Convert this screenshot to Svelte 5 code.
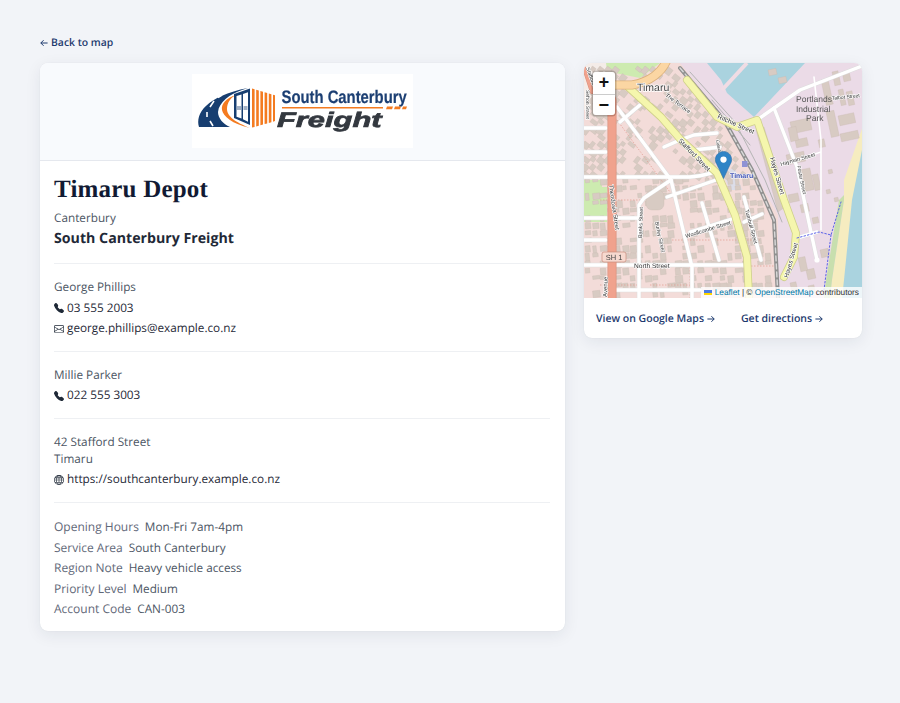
<script lang="ts">
	const contacts = [
		{ name: 'George Phillips', phone: '03 555 2003', email: 'george.phillips@example.co.nz' },
		{ name: 'Millie Parker', phone: '022 555 3003', email: '' }
	];

	const meta = [
		['Opening Hours', 'Mon-Fri 7am-4pm'],
		['Service Area', 'South Canterbury'],
		['Region Note', 'Heavy vehicle access'],
		['Priority Level', 'Medium'],
		['Account Code', 'CAN-003']
	];

	const phonePath =
		'M1.885.511a1.745 1.745 0 0 1 2.61.163L6.29 2.98c.329.423.445.974.315 1.494l-.547 2.19a.678.678 0 0 0 .178.643l2.457 2.457a.678.678 0 0 0 .644.178l2.189-.547a1.745 1.745 0 0 1 1.494.315l2.306 1.794c.829.645.905 1.87.163 2.611l-1.034 1.034c-.74.74-1.846 1.065-2.877.702a18.634 18.634 0 0 1-7.01-4.42 18.634 18.634 0 0 1-4.42-7.009c-.362-1.03-.037-2.137.703-2.877L1.885.511z';
	const mailPath =
		'M0 4a2 2 0 0 1 2-2h12a2 2 0 0 1 2 2v8a2 2 0 0 1-2 2H2a2 2 0 0 1-2-2V4Zm2-1a1 1 0 0 0-1 1v.217l7 4.2 7-4.2V4a1 1 0 0 0-1-1H2Zm13 2.383-4.708 2.825L15 11.105V5.383Zm-.034 6.876-5.64-3.471L8 9.583l-1.326-.795-5.64 3.47A1 1 0 0 0 2 13h12a1 1 0 0 0 .966-.741ZM1 11.105l4.708-2.897L1 5.383v5.722Z';
	const globePath =
		'M0 8a8 8 0 1 1 16 0A8 8 0 0 1 0 8zm7.5-6.923c-.67.204-1.335.82-1.887 1.855A7.97 7.97 0 0 0 5.145 4H7.5V1.077zM4.09 4a9.267 9.267 0 0 1 .64-1.539 6.7 6.7 0 0 1 .597-.933A7.025 7.025 0 0 0 2.255 4H4.09zm-.582 3.5c.03-.877.138-1.718.312-2.5H1.674a6.958 6.958 0 0 0-.656 2.5h2.49zM4.847 5a12.5 12.5 0 0 0-.338 2.5H7.5V5H4.847zM8.5 5v2.5h2.99a12.495 12.495 0 0 0-.337-2.5H8.5zM4.51 8.5a12.5 12.5 0 0 0 .337 2.5H7.5V8.5H4.51zm3.99 0V11h2.653c.187-.765.306-1.608.338-2.5H8.5zM5.145 12c.138.386.295.744.468 1.068.552 1.035 1.218 1.65 1.887 1.855V12H5.145zm.182 2.472a6.696 6.696 0 0 1-.597-.933A9.268 9.268 0 0 1 4.09 12H2.255a7.024 7.024 0 0 0 3.072 2.472zM3.82 11a13.652 13.652 0 0 1-.312-2.5h-2.49c.062.89.291 1.733.656 2.5H3.82zm6.853 3.472A7.024 7.024 0 0 0 13.745 12H11.91a9.27 9.27 0 0 1-.64 1.539 6.688 6.688 0 0 1-.597.933zM8.5 12v2.923c.67-.204 1.335-.82 1.887-1.855.173-.324.33-.682.468-1.068H8.5zm3.68-1h2.146c.365-.767.594-1.61.656-2.5h-2.49a13.65 13.65 0 0 1-.312 2.5zm2.802-3.5a6.959 6.959 0 0 0-.656-2.5H12.18c.174.782.282 1.623.312 2.5h2.49zM11.27 2.461c.247.464.462.98.64 1.539h1.835a7.024 7.024 0 0 0-3.072-2.472c.218.284.418.598.597.933zM10.855 4a7.966 7.966 0 0 0-.468-1.068C9.835 1.897 9.17 1.282 8.5 1.077V4h2.355z';

	// the map is a hand-traced sketch, coordinates are page pixels (see viewBox)
	let seed = 7;
	function rnd() {
		seed = (seed * 16807) % 2147483647;
		return seed / 2147483647;
	}

	function westSide(x: number, y: number) {
		const rail = y < 120 ? 680 + (y - 70) * 0.9 : 725 + (y - 120) * 0.48;
		return x < rail - 4;
	}

	const houses: { x: number; y: number; w: number; h: number; a: number }[] = [];
	for (let y = 66; y < 298; y += 7.5) {
		for (let x = 585; x < 770; x += 7.5) {
			if (!westSide(x, y) || rnd() < 0.4) continue;
			houses.push({
				x,
				y,
				w: 3.5 + rnd() * 4,
				h: 3.5 + rnd() * 4,
				a: y < 175 ? 38 : -6
			});
		}
	}

	const sheds = [
		[821, 80, 7, 26], [832, 72, 6, 14], [842, 72, 7, 10], [838, 90, 5, 16], [846, 92, 6, 14],
		[826, 112, 8, 26], [838, 116, 16, 10], [840, 134, 18, 8], [790, 122, 20, 12], [795, 140, 12, 8],
		[788, 128, 8, 14], [786, 155, 18, 10], [800, 170, 10, 22], [812, 175, 6, 16], [788, 195, 10, 8],
		[800, 205, 8, 8], [812, 218, 6, 6], [806, 270, 8, 10], [820, 250, 8, 8], [798, 258, 7, 14],
		[790, 283, 6, 10], [808, 286, 6, 8], [826, 190, 4, 4], [834, 198, 4, 4], [828, 170, 4, 4],
		[818, 140, 6, 8], [768, 70, 8, 6], [778, 78, 8, 6]
	];

	const whiteRoads = [
		'M584 177H690Q712 175 722 168',
		'M584 265H749',
		'M584 128H606',
		'M584 152H606',
		'M584 240H606',
		'M617 107L671 180L692 267V298',
		'M671 180L644 198L639 205V298',
		'M639 218H584',
		'M620 122L640 105',
		'M664 147L680 140L694 135L717 133',
		'M694 150L720 147',
		'M702 203L719 260',
		'M744 197L761 260',
		'M667 197L716 180',
		'M690 232L735 218',
		'M744 222L762 214',
		'M606 290H700',
		'M757 120L800 90L862 66',
		'M774 108L797 167L817 260',
		'M797 238L817 232'
	];

	const streetLabels = [
		{ t: 'Stafford Street', x: 678, y: 141, a: 46, s: 6.6 },
		{ t: 'Ritchie Street', x: 717, y: 118, a: 24, s: 6.6 },
		{ t: 'Hayes Street', x: 770, y: 158, a: 74, s: 6.6 },
		{ t: 'Hayes Street', x: 788, y: 278, a: -74, s: 6.2 },
		{ t: 'The Terrace', x: 665, y: 96, a: 36, s: 5.6 },
		{ t: 'Woollcombe Street', x: 686, y: 238, a: -17, s: 5.6 },
		{ t: 'Theodosia Street', x: 609, y: 185, a: 82, s: 6 },
		{ t: 'Avenue', x: 607, y: 297, a: -88, s: 6 },
		{ t: 'Banks Street', x: 642, y: 238, a: -88, s: 5.4 },
		{ t: 'Burley Street', x: 655, y: 222, a: 78, s: 5.4 },
		{ t: 'Turnbull Street', x: 745, y: 210, a: 75, s: 5.4 },
		{ t: 'Caledonian', x: 716, y: 140, a: 80, s: 4.6 },
		{ t: 'Hayman Street', x: 781, y: 166, a: -16, s: 5.4 },
		{ t: 'Foster Street', x: 797, y: 166, a: 78, s: 5 },
		{ t: 'Talbot Street', x: 832, y: 100, a: -6, s: 5 },
		{ t: 'Sefton Street', x: 586, y: 90, a: 90, s: 5 },
		{ t: 'Stafford', x: 586, y: 68, a: 70, s: 5.4 },
		{ t: 'North Street', x: 634, y: 268, a: 0, s: 6.6 }
	];
</script>

<main class="page">
	<a class="back" href="#map">
		<svg viewBox="0 0 8 8"><path d="M7.6 4H.8M3.6 1.2L.8 4l2.8 2.8" /></svg>Back to map
	</a>

	<div class="layout">
		<article class="card depot">
			<div class="logo-band">
				<svg class="logo" viewBox="0 0 221 74" role="img" aria-label="South Canterbury Freight">
					<rect width="221" height="74" fill="#fff" />
					<path d="M7 53C3 40 14 22 56 14L50 16C38 20 27 28 26 38C26 44 31 50 38 53Z" fill="#173e70" />
					<path d="M30 21L26 23.5M22 27L18 33M15 38L15 43M18 47L21 52" stroke="#fff" stroke-width="1.6" fill="none" />
					<path d="M44 21C34 24 29 30 30 36C31 42 40 50 58 54C48 50 35 44 35 35C35 29 38 24 44 21Z" fill="#f47b20" />
					<path d="M42 20L58 14.5V51L42 44Z" fill="#173e70" />
					<path d="M44.5 22L49.5 20.4V44.6L44.5 42.8ZM51 20L56 18.2V47.8L51 45.2Z" fill="#fff" />
					<path d="M45 33H49M45 35H49M51.5 33H55.5M51.5 35H55.5" stroke="#173e70" stroke-width=".8" />
					<g fill="#f47b20">
						<path d="M60 14.5L62.6 15.3V53L60 53.6Z" />
						<path d="M64.2 15.8L66.8 16.6V51.8L64.2 52.5Z" />
						<path d="M68.4 17L71 17.8V50.6L68.4 51.3Z" />
						<path d="M72.6 18.3L75.2 19V49.4L72.6 50.1Z" />
						<path d="M76.8 19.5L79.4 20.2V48.2L76.8 48.9Z" />
						<path d="M81 20.7L83 21.3V47L81 47.7Z" />
					</g>
					<text class="logo-top" transform="translate(89.5 29.4) scale(.824 1)">South Canterbury</text>
					<path d="M90 33H191V34.6H90Z" fill="#f47b20" />
					<path d="M195 32.6H201L200 35.2H194ZM203 32.6H209L208 35.2H202ZM211 32.6H215L214 35.2H210Z" fill="#f47b20" />
					<text class="logo-bottom" transform="translate(85 52.7) scale(1.47 1)">Freight</text>
				</svg>
			</div>

			<section class="section head">
				<h1>Timaru Depot</h1>
				<p class="muted">Canterbury</p>
				<p class="company">South Canterbury Freight</p>
			</section>

			{#each contacts as c}
				<section class="section rows">
					<p class="muted">{c.name}</p>
					<p class="icon-row">
						<svg viewBox="0 0 16 16"><path d={phonePath} /></svg>{c.phone}
					</p>
					{#if c.email}
						<p class="icon-row">
							<svg viewBox="0 0 16 16"><path d={mailPath} /></svg>{c.email}
						</p>
					{/if}
				</section>
			{/each}

			<section class="section rows">
				<p class="muted address">42 Stafford Street<br />Timaru</p>
				<p class="icon-row">
					<svg viewBox="0 0 16 16"><path d={globePath} /></svg>https://southcanterbury.example.co.nz
				</p>
			</section>

			<section class="section rows last">
				{#each meta as [label, value]}
					<p class="meta"><span>{label}</span>{value}</p>
				{/each}
			</section>
		</article>

		<aside class="card map-card">
			<div class="map">
				<svg class="tiles" viewBox="584 63 278 235" aria-hidden="true">
					<rect x="584" y="63" width="278" height="235" fill="#f3dcd9" />
					<path d="M680 63L725 120L778 215V298H862V63Z" fill="#ebdbe7" />
					<path d="M707 63L721 80L727 93L754 117L805 63Z" fill="#aad3df" />
					<path d="M747 63L722 90" stroke="#f0dce4" stroke-width="4" fill="none" />
					<path d="M864 123L851 160L844 180V200L832 280L830 298H862V123Z" fill="#f6ecc0" />
					<path d="M862 150L856 180L852 200L844 280L842 298H862Z" fill="#aad3df" />
					<path d="M844 195L839 200L826 280L824 298H830L832 280L844 200Z" fill="#c8dfae" />
					<path d="M584 187H607V222H584Z" fill="#cdebb0" />
					<path d="M584 180H602V190H584ZM600 63H660L640 78L610 72Z" fill="#cdebb0" />
					<path d="M584 63H606L612 110H584Z" fill="#f4ece8" />
					<path d="M722 172L735 168L742 190H730Z" fill="#dcdde8" />

					<g fill="#d8cbc3" stroke="#c6b8ae" stroke-width=".3">
						{#each houses as h}
							<rect x={h.x} y={h.y} width={h.w} height={h.h} transform="rotate({h.a} {h.x} {h.y})" />
						{/each}
						{#each sheds as s}
							<rect x={s[0]} y={s[1]} width={s[2]} height={s[3]} transform="rotate(-12 {s[0]} {s[1]})" />
						{/each}
						<path d="M756 130L764 127L788 205L778 212Z" />
						<rect x="646" y="190" width="18" height="20" rx="6" />
					</g>

					<g fill="none" stroke="#e39b90" stroke-width=".7" stroke-dasharray="1.5 1.5">
						<path d="M617 120L670 192M600 200H640M672 240H760M690 255V298M600 285H640M650 285H690M748 266H775" />
					</g>

					<g fill="none" stroke-linecap="round" stroke-linejoin="round">
						<g stroke="#ddd" stroke-width="4.4">
							{#each whiteRoads as d}<path {d} />{/each}
						</g>
						<g stroke="#fff" stroke-width="3.4">
							{#each whiteRoads as d}<path {d} />{/each}
						</g>
						<path d="M814 77L821 140V230M781 165L821 152" stroke="#fff" stroke-width="1.6" />
						<circle cx="817" cy="260" r="2.6" fill="#fff" stroke="none" />

						<path d="M680 68L724 120L752 170L774 220L778 298" stroke="#8f8f8f" stroke-width="4" />
						<path d="M680 68L724 120L752 170L774 220L778 298" stroke="#d9d9d9" stroke-width="1.4" stroke-dasharray="5 3" />
						<path d="M690 72L735 122L765 180L782 222M712 100L750 145" stroke="#b5b5b5" stroke-width="1" />

						<path d="M584 68L592 92" stroke="#d98f7c" stroke-width="4" />
						<path d="M612 100V298" stroke="#d98f7c" stroke-width="9" />
						<path d="M584 68L592 92" stroke="#f0a28d" stroke-width="3" />
						<path d="M612 100V298" stroke="#f0a28d" stroke-width="7.6" />

						<path d="M627 86L661 117L681 140L717 173L735 215L747 257L749 298" stroke="#cfd08a" stroke-width="8" />
						<path d="M627 86L661 117L681 140L717 173L735 215L747 257L749 298" stroke="#f5f6ad" stroke-width="6.4" />
						<path d="M687 80L717 117L737 127L757 120L784 200L796 233L794 257L784 277" stroke="#cfd08a" stroke-width="8" />
						<path d="M687 80L717 117L737 127L757 120L784 200L796 233L794 257L784 277" stroke="#f5f6ad" stroke-width="6.4" />

						<path d="M667 60C662 72 650 82 632 85H600" stroke="#dcb27d" stroke-width="9" />
						<path d="M667 60C662 72 650 82 632 85H600" stroke="#fbd6a3" stroke-width="7.4" />

						<path d="M797 238L819 232L831 235L841 202M831 235L824 290" stroke="#5a62e8" stroke-width="1" stroke-dasharray="1.6 2" />
					</g>

					<g class="street">
						{#each streetLabels as l}
							<text x={l.x} y={l.y} font-size={l.s} transform="rotate({l.a} {l.x} {l.y})">{l.t}</text>
						{/each}
					</g>
					<text class="place" x="637" y="91">Timaru</text>
					<text class="area" x="796" y="102">Portlands</text>
					<text class="area" x="796" y="112">Industrial</text>
					<text class="area" x="806" y="121">Park</text>
					<rect x="742" y="161" width="5.5" height="6" fill="#8f92d4" />
					<text class="station" x="730" y="178">Timaru</text>
					<rect x="602" y="252" width="24" height="10" rx="2" fill="#f7d9cf" stroke="#c88d7c" stroke-width=".7" />
					<text class="shield" x="614" y="260">SH 1</text>
				</svg>

				<div class="zoom-ctl">
					<button aria-label="Zoom in">+</button>
					<button aria-label="Zoom out">−</button>
				</div>

				<svg class="pin" viewBox="0 0 25 41" aria-hidden="true">
					<path d="M12.5 0.5C5.9 0.5 0.5 5.9 0.5 12.5C0.5 15 1.3 17.4 2.6 19.3L12.5 40.5L22.4 19.3C23.7 17.4 24.5 15 24.5 12.5C24.5 5.9 19.1 0.5 12.5 0.5Z" fill="#2f84c6" stroke="#2a6fa8" stroke-width=".8" />
					<circle cx="12.5" cy="12.5" r="4.6" fill="#fff" />
				</svg>

				<div class="attribution">
					<i class="flag"></i> <a href="#leaflet">Leaflet</a> | © <a href="#osm">OpenStreetMap</a> contributors
				</div>
			</div>
			<div class="map-links">
				<a href="#google">View on Google Maps<svg viewBox="0 0 8 8"><path d="M.4 4h6.8M4.4 1.2L7.2 4 4.4 6.8" /></svg></a>
				<a href="#directions">Get directions<svg viewBox="0 0 8 8"><path d="M.4 4h6.8M4.4 1.2L7.2 4 4.4 6.8" /></svg></a>
			</div>
		</aside>
	</div>
</main>

<style>
	:global(body) {
		margin: 0;
		background: #f2f4f8;
	}

	.page {
		height: 703px;
		box-sizing: border-box;
		padding: 35px 38px 0 40px;
		font-family: 'Open Sans', sans-serif;
		font-size: 11.75px;
		color: #1f2937;
		text-rendering: geometricPrecision;
	}

	p {
		margin: 0;
	}

	a {
		display: inline-flex;
		align-items: center;
		color: #1e3a6e;
		text-decoration: none;
		font-weight: 600;
	}

	a svg {
		width: 8px;
		height: 8px;
		fill: none;
		stroke: currentColor;
		stroke-width: 1;
	}

	.back {
		display: flex;
		gap: 3px;
		font-size: 10.4px;
		line-height: 16px;
		margin-bottom: 12px;
	}

	.layout {
		display: grid;
		grid-template-columns: 525px 278px;
		gap: 19px;
		align-items: start;
	}

	.card {
		background: #fff;
		border-radius: 8px;
		overflow: hidden;
		box-shadow: 0 4px 16px rgba(30, 41, 59, 0.08), 0 0 1px rgba(30, 41, 59, 0.12);
	}

	.logo-band {
		display: flex;
		justify-content: center;
		padding: 11px 0 12px;
		background: #f8fafd;
		border-bottom: 1px solid #e5e8ee;
	}

	.logo {
		display: block;
		width: 221px;
		height: 74px;
		filter: blur(0.3px);
	}

	.logo-top {
		font: 700 18px 'Liberation Sans', sans-serif;
		fill: #1c3f73;
		stroke: #1c3f73;
		stroke-width: 0.2px;
	}

	.logo-bottom {
		font: italic 700 21px 'Liberation Sans', sans-serif;
		fill: #33383f;
		stroke: #33383f;
		stroke-width: 0.7px;
	}

	.section {
		margin: 0 15px 0 14px;
		border-bottom: 1px solid #eef0f3;
	}

	.section.last {
		border-bottom: 0;
	}

	.head {
		padding: 11px 0 14px;
	}

	h1 {
		margin: 0 0 2px;
		font: 700 25px/36px 'Liberation Serif', serif;
		letter-spacing: 0.2px;
		color: #111a33;
	}

	.muted {
		color: #4b5563;
		line-height: 17px;
	}

	.company {
		margin-top: 2px;
		font-size: 14.2px;
		font-weight: 700;
		line-height: 20px;
		color: #1f2937;
	}

	.rows {
		display: flex;
		flex-direction: column;
		gap: 3.5px;
		padding: 15px 0 13.7px;
	}

	.icon-row {
		display: flex;
		align-items: center;
		gap: 3px;
		line-height: 17px;
	}

	.icon-row svg {
		width: 10px;
		height: 10px;
		flex: none;
		fill: #1f2937;
	}

	.meta {
		display: flex;
		align-items: baseline;
		height: 17px;
		line-height: 17px;
		color: #4b5563;
	}

	.meta span {
		margin-right: 6px;
		font-size: 12px;
		font-weight: 500;
		color: #5f6878;
	}

	.map {
		position: relative;
		height: 235px;
		overflow: hidden;
	}

	.tiles {
		display: block;
		width: 278px;
		height: 235px;
		filter: blur(0.35px);
	}

	.street text {
		font-family: 'Liberation Sans', sans-serif;
		fill: #333;
		stroke: #fff;
		stroke-width: 1.2px;
		paint-order: stroke;
	}

	.place {
		font: 10.5px 'Liberation Sans', sans-serif;
		fill: #444;
		stroke: #fff;
		stroke-width: 1.5px;
		paint-order: stroke;
	}

	.area {
		font: 8.5px 'Liberation Sans', sans-serif;
		fill: #555;
	}

	.station {
		font: 700 7px 'Liberation Sans', sans-serif;
		fill: #3a4db0;
		stroke: #fff;
		stroke-width: 1px;
		paint-order: stroke;
	}

	.shield {
		font: 7.5px 'Liberation Sans', sans-serif;
		fill: #444;
		text-anchor: middle;
	}

	.zoom-ctl {
		position: absolute;
		left: 9px;
		top: 9px;
		display: flex;
		flex-direction: column;
		border-radius: 3px;
		box-shadow: 0 0 0 1.5px rgba(0, 0, 0, 0.2);
		overflow: hidden;
	}

	.zoom-ctl button {
		width: 22px;
		height: 21.5px;
		padding: 1px 0 0;
		border: 0;
		background: #fff;
		color: #111;
		font: 700 18px/20px 'Liberation Mono', monospace;
	}

	.zoom-ctl button + button {
		border-top: 1px solid #ccc;
	}

	.pin {
		position: absolute;
		left: 131px;
		top: 88px;
		width: 17px;
		height: 28px;
	}

	.attribution {
		position: absolute;
		right: 0;
		bottom: 0;
		padding: 0 3px;
		background: rgba(255, 255, 255, 0.8);
		font: 8.3px/11px 'Liberation Sans', sans-serif;
		color: #333;
		white-space: nowrap;
	}

	.attribution a {
		display: inline;
		color: #0078a8;
		font-weight: 400;
	}

	.flag {
		display: inline-block;
		width: 8px;
		height: 5.5px;
		background: linear-gradient(#4c7be1 50%, #ffd500 50%);
	}

	.map-links {
		display: flex;
		gap: 26px;
		padding: 13px 12px 11px;
		font-size: 10.5px;
		line-height: 16px;
	}

	.map-links svg {
		margin-left: 3px;
	}
</style>
